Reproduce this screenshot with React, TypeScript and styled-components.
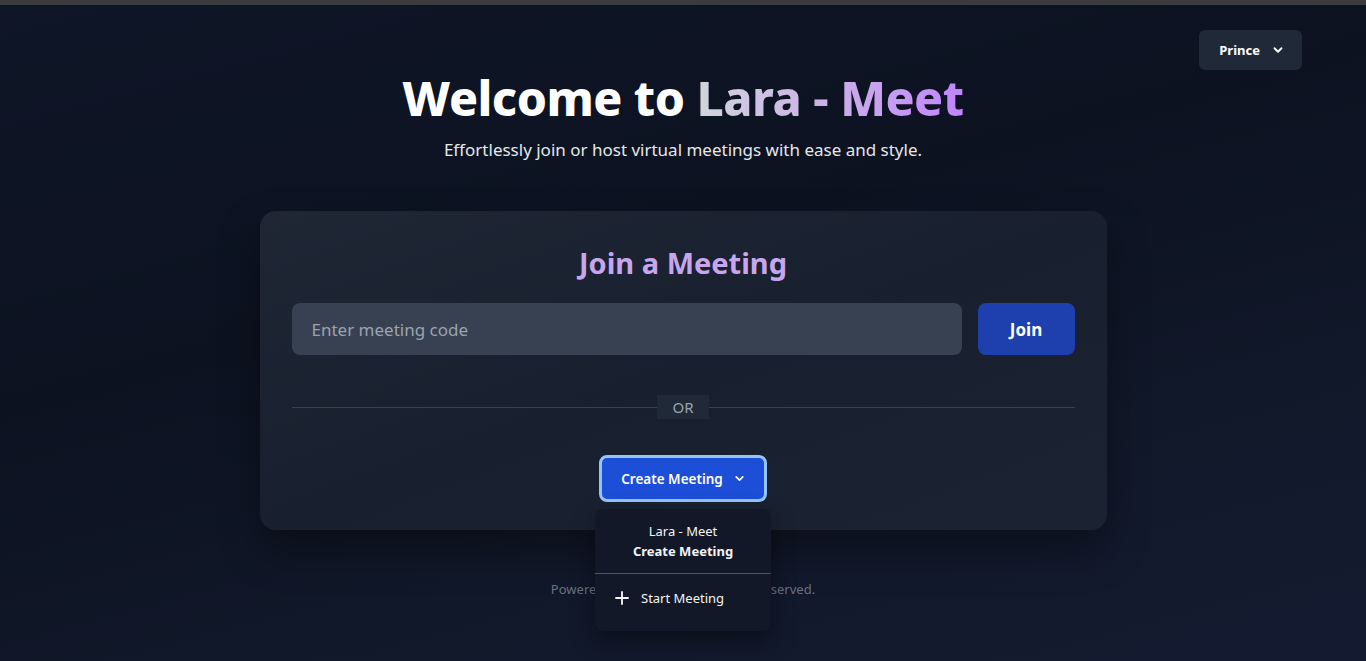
import React from "react";
import styled, { createGlobalStyle } from "styled-components";

const GlobalStyle = createGlobalStyle`
  html, body {
    margin: 0;
    padding: 0;
    height: 100%;
  }
  body {
    font-family: "Noto Sans", "Liberation Sans", sans-serif;
    background: #0e1424;
  }
`;

const Page = styled.div`
  position: relative;
  min-height: 661px;
  box-sizing: border-box;
  border-top: 5px solid #3b3b3d;
  background: linear-gradient(165deg, #0f1627 0%, #0c1220 40%, #111829 70%, #141b31 100%);
  display: flex;
  flex-direction: column;
  align-items: center;
  overflow: hidden;
`;

const TopBar = styled.div`
  align-self: stretch;
  display: flex;
  justify-content: flex-end;
  padding: 25px 64px 0 0;
`;

const UserButton = styled.button`
  display: flex;
  align-items: center;
  gap: 11px;
  height: 40px;
  padding: 0 17px 0 20px;
  border: none;
  border-radius: 6px;
  background: #1f2937;
  color: #ffffff;
  font-family: inherit;
  font-size: 13px;
  font-weight: 700;
`;

const Title = styled.h1`
  margin: -2px 0 0;
  font-size: 48px;
  line-height: 60px;
  font-weight: 800;
  color: #ffffff;
  letter-spacing: -0.5px;
`;

const Accent = styled.span`
  background: linear-gradient(90deg, #d1d5db 0%, #c9a8ec 60%, #c084fc 100%);
  -webkit-background-clip: text;
  background-clip: text;
  color: transparent;
`;

const Subtitle = styled.p`
  margin: 8px 0 0;
  font-size: 17px;
  line-height: 28px;
  color: #e5e7eb;
`;

const Card = styled.div`
  position: relative;
  box-sizing: border-box;
  width: 847px;
  margin-top: 47px;
  padding: 32px 32px 28px;
  border-radius: 16px;
  background: linear-gradient(160deg, #1f2735 0%, #18202f 50%, #1b2231 100%);
  box-shadow: 0 20px 40px rgba(0, 0, 0, 0.35);
  display: flex;
  flex-direction: column;
  align-items: center;
`;

const CardTitle = styled.h2`
  margin: 0;
  font-size: 29px;
  line-height: 40px;
  font-weight: 700;
  color: #c8a6ee;
`;

const JoinRow = styled.div`
  align-self: stretch;
  display: flex;
  gap: 16px;
  margin-top: 20px;
`;

const CodeInput = styled.input`
  flex: 1;
  height: 52px;
  box-sizing: border-box;
  padding: 0 20px;
  border: none;
  border-radius: 8px;
  background: #374151;
  color: #e5e7eb;
  font-family: inherit;
  font-size: 17px;
  outline: none;
  &::placeholder {
    color: #9ca3af;
  }
`;

const JoinButton = styled.button`
  width: 97px;
  height: 52px;
  border: none;
  border-radius: 8px;
  background: #1e40af;
  color: #ffffff;
  font-family: inherit;
  font-size: 17px;
  font-weight: 700;
`;

const Divider = styled.div`
  align-self: stretch;
  display: flex;
  align-items: center;
  margin-top: 40px;
  &::before,
  &::after {
    content: "";
    flex: 1;
    height: 1px;
    background: #374151;
  }
`;

const OrLabel = styled.span`
  padding: 0 15px;
  height: 24px;
  line-height: 24px;
  background: #1f2937;
  color: #9ca3af;
  font-size: 15px;
`;

const MenuWrap = styled.div`
  position: relative;
  margin-top: 36px;
`;

const CreateButton = styled.button`
  display: flex;
  align-items: center;
  gap: 10px;
  height: 47px;
  box-sizing: border-box;
  padding: 0 18px 0 19px;
  border: 3px solid #93c5fd;
  border-radius: 8px;
  background: #1d4ed8;
  color: #ffffff;
  font-family: inherit;
  font-size: 13.5px;
  font-weight: 600;
`;

const Menu = styled.div`
  position: absolute;
  top: 54px;
  left: 50%;
  transform: translateX(-50%);
  width: 176px;
  border-radius: 8px;
  background: #121827;
  box-shadow: 0 10px 25px rgba(0, 0, 0, 0.4);
  z-index: 10;
  padding-bottom: 9px;
`;

const MenuHeader = styled.div`
  padding: 12px 8px 12px;
  border-bottom: 1px solid #4b5563;
  text-align: center;
  color: #f3f4f6;
  font-size: 13px;
  line-height: 20px;
`;

const MenuStrong = styled.div`
  font-weight: 700;
`;

const MenuItem = styled.div`
  display: flex;
  align-items: center;
  gap: 10px;
  padding: 14px 18px;
  color: #f3f4f6;
  font-size: 13px;
  line-height: 20px;
`;

const Footer = styled.p`
  margin: 50px 0 0;
  font-size: 13px;
  color: #6b7280;
`;

const Chevron: React.FC<{ size?: number }> = ({ size = 14 }) => (
  <svg width={size} height={size} viewBox="0 0 24 24" fill="none" stroke="currentColor" strokeWidth={3.2} strokeLinecap="round" strokeLinejoin="round">
    <path d="M6 9l6 6 6-6" />
  </svg>
);

const Plus = () => (
  <svg width={18} height={18} viewBox="0 0 24 24" fill="none" stroke="currentColor" strokeWidth={2.5} strokeLinecap="round">
    <path d="M12 4v16M4 12h16" />
  </svg>
);

const App: React.FC = () => {
  return (
    <Page>
      <GlobalStyle />
      <TopBar>
        <UserButton>
          Prince
          <Chevron />
        </UserButton>
      </TopBar>
      <Title>
        Welcome to <Accent>Lara - Meet</Accent>
      </Title>
      <Subtitle>Effortlessly join or host virtual meetings with ease and style.</Subtitle>
      <Card>
        <CardTitle>Join a Meeting</CardTitle>
        <JoinRow>
          <CodeInput placeholder="Enter meeting code" />
          <JoinButton>Join</JoinButton>
        </JoinRow>
        <Divider>
          <OrLabel>OR</OrLabel>
        </Divider>
        <MenuWrap>
          <CreateButton>
            Create Meeting
            <Chevron size={13} />
          </CreateButton>
          <Menu>
            <MenuHeader>
              Lara - Meet
              <MenuStrong>Create Meeting</MenuStrong>
            </MenuHeader>
            <MenuItem>
              <Plus />
              Start Meeting
            </MenuItem>
          </Menu>
        </MenuWrap>
      </Card>
      <Footer>Powered by Lara - Meet. All rights reserved.</Footer>
    </Page>
  );
};

export default App;
